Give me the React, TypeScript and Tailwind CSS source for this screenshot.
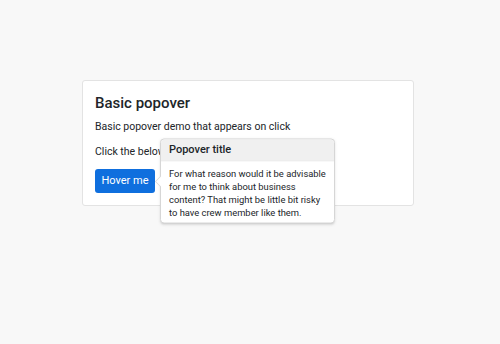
import React from "react";

export default function App() {
  return (
    <div className="w-[500px] h-[344px] bg-[#f8f8f8] flex items-start pt-[80px] pl-[82px]" style={{ fontFamily: 'Roboto, "Liberation Sans", Arial, sans-serif' }}>
      <div className="w-[332px] h-[126px] bg-white border border-[#e3e3e3] rounded-[3px] px-[12px] pt-[13px] text-[#212529] flex flex-col items-start">
        <h2 className="text-[15px] font-medium leading-[18px]">Basic popover</h2>
        <p className="text-[10.5px] leading-[14px] mt-[8px]">Basic popover demo that appears on click</p>
        <p className="text-[10.5px] leading-[14px] mt-[11px]">Click the below button</p>
        <div className="relative mt-[10px] flex">
          <button className="bg-[#0f6fde] text-white text-[11px] h-[24px] w-[60px] rounded-[3px]">Hover me</button>
          <div className="absolute left-[65px] top-1/2 -translate-y-1/2 w-[175px] bg-white border border-[#d6d6d6] rounded-[4px] shadow-sm z-10 flex flex-col">
            <div className="absolute left-[-6px] top-1/2 -translate-y-1/2 w-0 h-0 border-y-[6px] border-y-transparent border-r-[6px] border-r-[#d6d6d6]" />
            <div className="absolute left-[-5px] top-1/2 -translate-y-1/2 w-0 h-0 border-y-[6px] border-y-transparent border-r-[6px] border-r-white" />
            <div className="bg-[#f0f0f0] border-b border-[#e3e3e3] rounded-t-[4px] px-[8px] h-[22px] flex items-center text-[11px] font-medium text-[#212529]">Popover title</div>
            <div className="px-[8px] pt-[5px] pb-[4px] text-[9.4px] leading-[13px] text-[#212529]">
              For what reason would it be advisable for me to think about business content? That might be little bit risky to have crew member like them.
            </div>
          </div>
        </div>
      </div>
    </div>
  );
}
